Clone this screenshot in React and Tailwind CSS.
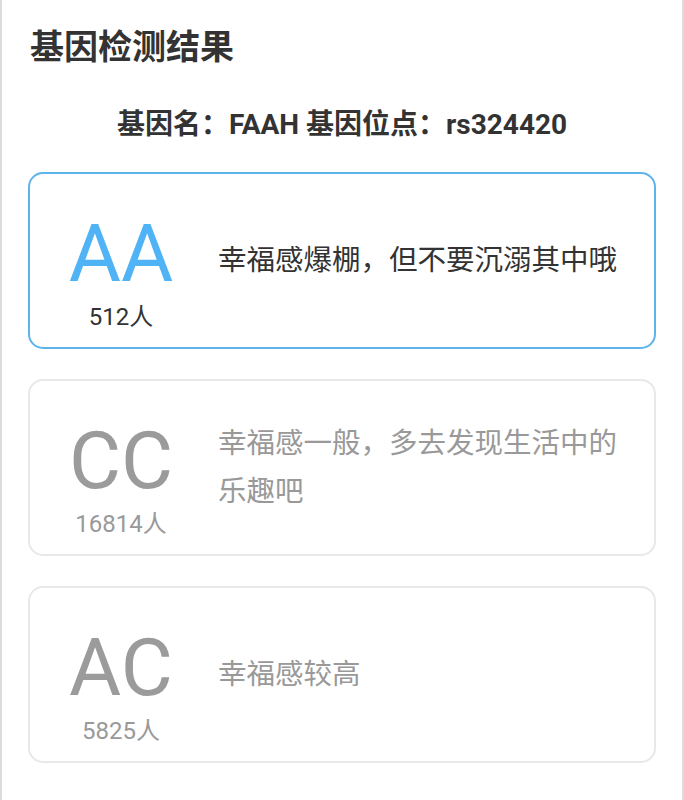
import React from 'react';

const results = [
  { type: 'AA', count: '512人', desc: '幸福感爆棚，但不要沉溺其中哦', active: true },
  { type: 'CC', count: '16814人', desc: '幸福感一般，多去发现生活中的乐趣吧', active: false },
  { type: 'AC', count: '5825人', desc: '幸福感较高', active: false }
];

const ResultCard = ({ item }) => {
  return (
    <div
      className={`flex items-center h-[177px] rounded-[15px] border-2 ${
        item.active ? 'border-[#5db3ec]' : 'border-[#e8e8e8]'
      }`}
    >
      {/* Genotype + count */}
      <div className="w-[150px] ml-[16px] flex flex-col items-center pt-[24px]">
        <div
          className={`text-[80px] leading-[80px] ${
            item.active ? 'text-[#4fb3f6]' : 'text-[#9b9b9b]'
          }`}
        >
          {item.type}
        </div>
        <div
          className={`mt-[8px] text-[24px] leading-[30px] ${
            item.active ? 'text-[#333333]' : 'text-[#999999]'
          }`}
        >
          {item.count}
        </div>
      </div>

      {/* Description */}
      <div
        className={`ml-[22px] mr-[24px] flex-1 text-[28.5px] leading-[48px] ${
          item.active ? 'text-[#333333]' : 'text-[#999999]'
        }`}
      >
        {item.desc}
      </div>
    </div>
  );
};

const App = () => {
  return (
    <div
      className="w-[684px] min-h-[800px] bg-white border-l-2 border-r-2 border-[#dcdcdc]"
      style={{ fontFamily: 'Roboto, "Noto Sans CJK SC", sans-serif' }}
    >
      {/* Header */}
      <h1 className="pt-[24px] pl-[28px] text-[34px] leading-[46px] font-bold text-[#333333]">
        基因检测结果
      </h1>

      <div className="mt-[35px] text-center text-[28px] leading-[40px] font-bold text-[#333333]">
        基因名：FAAH 基因位点：rs324420
      </div>

      {/* Result cards */}
      <div className="mt-[27px] mx-[26px] flex flex-col gap-[30px]">
        {results.map((item) => (
          <ResultCard key={item.type} item={item} />
        ))}
      </div>
    </div>
  );
};

export default App;
